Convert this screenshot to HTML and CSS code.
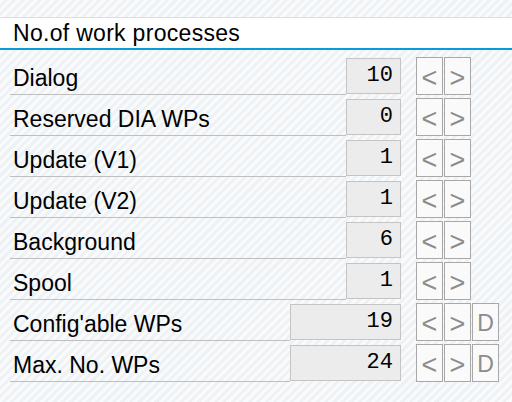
FILE: index.html
```html
<!DOCTYPE html>
<html>
<head>
<meta charset="utf-8">
<link rel="stylesheet" href="styles.css">
</head>
<body>
<div class="page">
  <div class="header">No.of work processes</div>
  <div class="rows">
    <div class="row">
      <div class="label">Dialog</div>
      <div class="field">10</div>
      <div class="btns"><span class="btn">&lt;</span><span class="btn">&gt;</span></div>
    </div>
    <div class="row">
      <div class="label">Reserved DIA WPs</div>
      <div class="field">0</div>
      <div class="btns"><span class="btn">&lt;</span><span class="btn">&gt;</span></div>
    </div>
    <div class="row">
      <div class="label">Update (V1)</div>
      <div class="field">1</div>
      <div class="btns"><span class="btn">&lt;</span><span class="btn">&gt;</span></div>
    </div>
    <div class="row">
      <div class="label">Update (V2)</div>
      <div class="field">1</div>
      <div class="btns"><span class="btn">&lt;</span><span class="btn">&gt;</span></div>
    </div>
    <div class="row">
      <div class="label">Background</div>
      <div class="field">6</div>
      <div class="btns"><span class="btn">&lt;</span><span class="btn">&gt;</span></div>
    </div>
    <div class="row">
      <div class="label">Spool</div>
      <div class="field">1</div>
      <div class="btns"><span class="btn">&lt;</span><span class="btn">&gt;</span></div>
    </div>
    <div class="row">
      <div class="label">Config'able WPs</div>
      <div class="field wide">19</div>
      <div class="btns"><span class="btn">&lt;</span><span class="btn">&gt;</span><span class="btn d">D</span></div>
    </div>
    <div class="row">
      <div class="label">Max. No. WPs</div>
      <div class="field wide">24</div>
      <div class="btns"><span class="btn">&lt;</span><span class="btn">&gt;</span><span class="btn d">D</span></div>
    </div>
  </div>
</div>
</body>
</html>
```

FILE: styles.css
```css
html, body {
  margin: 0;
  padding: 0;
}
body {
  width: 512px;
  height: 402px;
  overflow: hidden;
  background: repeating-linear-gradient(135deg, #f9fafb 0px, #f9fafb 3px, #eff2f5 3px, #eff2f5 6px);
  font-family: "Liberation Sans", Arial, sans-serif;
  color: #000;
}
.page {
  padding-top: 17px;
}
.header {
  border-top: 1px solid #dedede;
  border-bottom: 2px solid #0a9ad8;
  background: #fff;
  height: 30px;
  line-height: 30px;
  font-size: 23px;
  letter-spacing: 0.3px;
  padding-left: 13px;
}
.rows {
  padding-top: 4px;
  padding-left: 10px;
}
.row {
  display: flex;
  height: 41px;
}
.label {
  flex: 1;
  box-sizing: border-box;
  height: 41px;
  border-bottom: 1px solid #bfbfbf;
  padding-left: 3px;
  padding-top: 11px;
  line-height: 26px;
  font-size: 23px;
  white-space: nowrap;
}
.field {
  box-sizing: border-box;
  width: 55px;
  height: 36px;
  margin-top: 4px;
  border: 1px solid #c4c4c4;
  background: #ececec;
  text-align: right;
  padding-right: 7px;
  font-family: "Liberation Mono", "Courier New", monospace;
  font-size: 22px;
  line-height: 34px;
}
.field.wide {
  width: 111px;
}
.btns {
  display: flex;
  gap: 1px;
  width: 96px;
  margin-left: 15px;
  margin-top: 3px;
  height: 38px;
}
.btn {
  box-sizing: border-box;
  width: 27px;
  height: 38px;
  border: 1px solid #a8a8a8;
  background: #fafafa;
  color: #8c8c8c;
  font-size: 27px;
  line-height: 40px;
  text-align: center;
}
.btn.d {
  font-size: 23px;
  line-height: 38px;
}
```
